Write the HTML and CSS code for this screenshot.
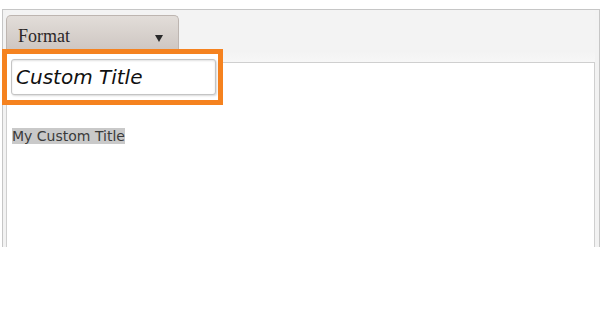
FILE: index.html
```html
<!DOCTYPE html>
<html lang="en">
<head>
    <meta charset="UTF-8">
    <meta name="viewport" content="width=device-width, initial-scale=1.0">
    <title>Editor - Custom Format</title>
    <link rel="stylesheet" href="styles.css">
</head>
<body>
    <div class="editor">
        <div class="toolbar">
            <div class="format-btn">
                <span>Format</span>
                <span class="arrow"></span>
            </div>
        </div>
        <div class="content">
            <p><span class="selected">My Custom Title</span></p>
        </div>
    </div>

    <!-- Highlighted custom format field -->
    <div class="callout">
        <input type="text" class="title-input" value="Custom Title">
    </div>
</body>
</html>
```

FILE: styles.css
```css
body {
    margin: 0;
    padding: 0;
    background-color: #fff;
    font-family: "DejaVu Sans", Verdana, sans-serif;
    color: #333;
}
.editor {
    margin: 9px 0 0 2px;
    width: 589px;
    height: 237px;
    overflow: hidden;
    padding: 0 4px 0 3px;
    background-color: #f2f2f2;
    border: 1px solid #c6c6c6;
    border-bottom: none;
}
.toolbar {
    height: 47px;
    padding-top: 5px;
    background: linear-gradient(#f3f3f3, #f3f3f3 80%, #f7f7f7);
}
.format-btn {
    width: 173px;
    height: 40px;
    box-sizing: border-box;
    display: flex;
    align-items: center;
    justify-content: space-between;
    padding: 2px 15px 0 11px;
    background: linear-gradient(#e2ddd9, #cbc3be);
    border: 1px solid #bdb5b0;
    border-bottom: none;
    border-radius: 5px 5px 0 0;
    font-family: "Liberation Serif", "Times New Roman", serif;
    font-size: 18px;
    color: #2b2727;
}
.arrow {
    width: 0;
    height: 0;
    border-left: 4.5px solid transparent;
    border-right: 4.5px solid transparent;
    border-top: 7px solid #2a2a2a;
    margin-top: 3px;
}
.content {
    height: 200px;
    background-color: #fff;
    border: 1px solid #cfcfcf;
    border-bottom: none;
    padding: 65px 5px 0 5px;
}
.content p {
    margin: 0;
    font-size: 14px;
    line-height: 17px;
    color: #3a3a3a;
}
.selected {
    background-color: #c9c9c9;
}
.callout {
    position: absolute;
    left: 2px;
    top: 49px;
    width: 211px;
    height: 46px;
    border: 5px solid #f5821f;
    background-color: #fff;
}
.title-input {
    display: block;
    box-sizing: border-box;
    margin: 5px 0 0 4px;
    width: 205px;
    height: 36px;
    padding: 0 4px;
    border: 1px solid #c4c4c4;
    border-radius: 3px;
    box-shadow: inset 0 1px 2px rgba(0, 0, 0, 0.12), 1px 1px 2px rgba(0, 0, 0, 0.15);
    font-family: "DejaVu Sans", Verdana, sans-serif;
    font-style: italic;
    font-size: 20px;
    color: #111;
    background-color: #fff;
    outline: none;
}
```
